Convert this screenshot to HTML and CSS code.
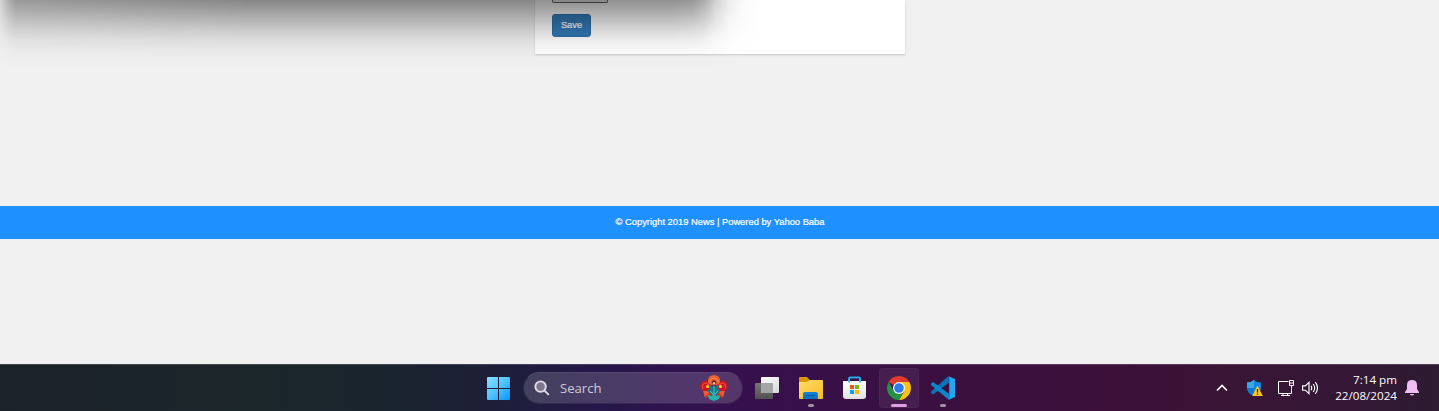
FILE: index.html
```html
<!DOCTYPE html>
<html lang="en">
<head>
<meta charset="utf-8">
<title>News</title>
<link rel="stylesheet" href="styles.css">
</head>
<body>
<main class="page">
  <section class="card">
    <div class="field"></div>
    <button class="save">Save</button>
  </section>
</main>
<footer class="footer"><span class="copy">© Copyright 2019 News | Powered by Yahoo Baba</span></footer>
<div class="below"></div>
<div class="window-shadow"></div>
<nav class="taskbar">
  <div class="cell start">
    <svg width="23" height="23" viewBox="0 0 23 23"><defs><linearGradient id="win" gradientUnits="userSpaceOnUse" x1="0" y1="0" x2="23" y2="23"><stop offset="0" stop-color="#89e1ff"/><stop offset=".5" stop-color="#4fc3fb"/><stop offset="1" stop-color="#0a94f8"/></linearGradient></defs><path fill="url(#win)" d="M1 0h10v11H0V1q0-1 1-1zM12 0h10q1 0 1 1v10H12zM0 12h11v11H1q-1 0-1-1zM12 12h11v10q0 1-1 1H12z"/></svg>
  </div>
  <div class="search">
    <svg width="16" height="16" viewBox="0 0 17 17" fill="none" stroke="#e0dce6" stroke-width="2" stroke-linecap="round"><circle cx="7" cy="7" r="5.600" fill="#81768f"/><path d="M11.200 11.200l4 4"/></svg>
    <span class="search-label">Search</span>
    <svg class="flower" width="28" height="26" viewBox="0 0 28 26">
      <path fill="#c4361c" d="M4 15l7 1 1 4-6 3q-3-2-2-8zM24 15l-7 1-1 4 6 3q3-2 2-8z"/>
      <path fill="#f0583a" d="M3 16l8 0-6 6zM25 16l-8 0 6 6z"/>
      <path fill="#c91824" d="M0 11q1-6 7-5l5 4-2 6-7 0q-3-2-3-5zM28 11q-1-6-7-5l-5 4 2 6 7 0q3-2 3-5z"/>
      <path fill="none" stroke="#f0443b" stroke-width="1.200" d="M3 14q-2-5 3-6l4 3M25 14q2-5-3-6l-4 3"/>
      <circle cx="7.500" cy="11.500" r="1.600" fill="#ffd02e"/><circle cx="20.500" cy="11.500" r="1.600" fill="#ffd02e"/>
      <path fill="#e8602c" d="M8 8V4l2-3 4-1 4 1 2 3v4l-3 2h-6z"/>
      <path fill="none" stroke="#ff8550" d="M10 7q0-4 4-4t4 4"/>
      <circle cx="14" cy="7.500" r="2.200" fill="#6c1830"/><circle cx="14" cy="8.300" r="1.200" fill="#ffc3a0"/>
      <path fill="#167b8c" d="M9 10l4 2 1-2 1 2 4-2-1 4 3 2-5 4h-4l-5-4 3-2z"/>
      <path fill="#23b5aa" d="M8 20l4 1 2-4 2 4 4-1-1 4-5 2-5-2z"/>
      <path stroke="#55d4d0" fill="none" stroke-width=".8" d="M14 11v8M10 16l3 3M18 16l-3 3"/>
    </svg>
  </div>
  <div class="cell">
    <svg width="24" height="22" viewBox="0 0 24 22"><defs><linearGradient id="tv" x1="0" y1="0" x2="1" y2="1"><stop stop-color="#fff"/><stop offset="1" stop-color="#d8d8d8"/></linearGradient><linearGradient id="tb" x1="0" y1="0" x2="0" y2="1"><stop stop-color="#787878"/><stop offset="1" stop-color="#505050"/></linearGradient></defs><rect y="6" width="18" height="16" rx="1" fill="url(#tb)"/><rect x="6" width="18" height="16" rx="1" fill="url(#tv)"/><path fill="#a5a5a5" d="M6 6h12v10H7q-1 0-1-1z"/></svg>
  </div>
  <div class="cell running">
    <svg width="24" height="22" viewBox="0 0 24 22"><defs><linearGradient id="fo" x1="0" y1="0" x2="1" y2="1"><stop stop-color="#ffdf68"/><stop offset="1" stop-color="#f7b928"/></linearGradient><linearGradient id="fb" x1="0" y1="0" x2="0" y2="1"><stop stop-color="#1683d5"/><stop offset="1" stop-color="#0f70c4"/></linearGradient></defs><path fill="#dc9706" d="M0 1q0-1 1-1h7l3 3h11q2 0 2 2v7H0z"/><path fill="url(#fo)" d="M0 5h8l3-2h12q1 0 1 1v17q0 1-1 1H1q-1 0-1-1z"/><path fill="url(#fb)" d="M4 22v-5q0-2 2-2h11q2 0 2 2v5z"/><path fill="#0a57a3" d="M7 18h9v1H7z"/></svg>
    <i class="dot"></i>
  </div>
  <div class="cell store">
    <svg width="23" height="24" viewBox="0 0 23 24"><defs><linearGradient id="bag" x1="0" y1="0" x2="0" y2="1"><stop stop-color="#fff"/><stop offset="1" stop-color="#e2e2e6"/></linearGradient></defs><path d="M6 7V2.500q0-1 1-1h9q1 0 1 1V7" fill="none" stroke="#25a9e6" stroke-width="2"/><path fill="url(#bag)" d="M0 5h23v15q0 3-3 3H3q-3 0-3-3z"/><path d="M6 4v2.500M17 4v2.500" stroke="#35c2f1" stroke-width="2"/><path fill="#f25022" d="M7 9h4v4H7z"/><path fill="#7fba00" d="M12 9h4v4h-4z"/><path fill="#00a4ef" d="M7 14h4v4H7z"/><path fill="#ffb900" d="M12 14h4v4h-4z"/></svg>
  </div>
  <div class="cell running active">
    <svg width="24" height="24" viewBox="0 0 24 24"><path fill="#e33b2e" d="M12 12L1.610 6A12 12 0 0 1 22.390 6z"/><path fill="#fbc116" d="M12 12V6h10.390A12 12 0 0 1 12 24l5.200-9z"/><path fill="#229342" d="M1.610 6A12 12 0 0 0 12 24l5.200-9H12L6.800 15z"/><circle cx="12" cy="12" r="6" fill="#fff"/><circle cx="12" cy="12" r="4.800" fill="#2f7bed"/></svg>
    <i class="dot"></i>
  </div>
  <div class="cell running">
    <svg width="24" height="24" viewBox="0 0 24 24"><path fill="#0873b5" d="M17.500 0L0 15.500v1.400l2.200 1.700L18 6.800z"/><path fill="#0b86ce" d="M0 7.800l2-1.700L18 17.800V24L0 9z"/><path fill="#25a5ef" d="M17.200 0L24 3v18l-6.800 3q1-.5 1-2V2q0-1.400-1-2z"/></svg>
    <i class="dot"></i>
  </div>
  <div class="tray">
    <svg class="chevron" width="12" height="8" viewBox="0 0 12 8"><path d="M1 6.500L6 1.500l5 5" fill="none" stroke="#fff" stroke-width="1.600"/></svg>
    <svg class="shield" width="16" height="17" viewBox="0 0 16 17"><path fill="#1687db" d="M7 0q3 2.500 7 2.500V8q0 5-7 8-7-3-7-8V2.500Q4 2.500 7 0z"/><path fill="#35a9ea" d="M7 0v8H0V2.500Q4 2.500 7 0z"/><path fill="#0f78cc" d="M7 8v8Q0 13 0 8z"/><path fill="#ffc322" d="M10.500 5.500L15.800 16H5.200z"/><path d="M10.500 9v3.500M10.500 13.500v1.300" stroke="#3a2b14" stroke-width="1.300"/></svg>
    <svg class="network" width="17" height="17" viewBox="0 0 17 17" fill="none" stroke="#fff" stroke-width="1"><path d="M10.500 1.500h-10v12h13v-5M5 13.500v2M9.500 13.500v2M3 15.500h9M11.500.5h4v5h-4zM11.500 3h4M13.500 5.500v3"/></svg>
    <svg class="sound" width="17" height="14" viewBox="0 0 17 14" fill="none" stroke="#fff" stroke-width="1.150"><path d="M.6 4.800h2.800L7 1.300v11.400L3.400 9.200H.6zM9 4.800q1.500 2.200 0 4.400M11.200 3q3 4 0 8M13.300 1.200q4.400 5.800 0 11.600"/></svg>
    <div class="clock"><span class="time">7:14 pm</span><span class="date">22/08/2024</span></div>
    <svg class="bell" width="14" height="16" viewBox="0 0 14 16"><path fill="#f0bdf2" d="M7 0q5 0 5 5v4l2 3v1H0v-1l2-3V5q0-5 5-5zM5 14h4q0 1.600-2 1.600T5 14z"/></svg>
  </div>
</nav>
</body>
</html>
```
FILE: styles.css
```css
* { box-sizing: border-box; }
body {
  margin: 0;
  width: 1439px;
  height: 411px;
  overflow: hidden;
  position: relative;
  background: #f0f0f0;
  font-family: "Liberation Sans", Arial, sans-serif;
}
.page { height: 206px; }
.card {
  width: 370px;
  height: 54px;
  margin-left: 535px;
  padding: 0 17px;
  background: #fff;
  box-shadow: 0 1px 2px rgba(0, 0, 0, .16);
}
.field {
  width: 56px;
  height: 3px;
  margin-bottom: 11px;
  background: #efefef;
  border: 1px solid #666;
  border-top: 0;
  border-radius: 0 0 2px 2px;
}
.save {
  display: block;
  width: 39px;
  height: 23px;
  padding: 0 0 2px;
  border: 1px solid #2e6da4;
  border-radius: 3px;
  background: #337ab7;
  color: #fff;
  font: 9.3px "Liberation Sans", Arial, sans-serif;
  -webkit-text-stroke: .2px #fff;
}
.footer {
  height: 33px;
  padding-left: 1px;
  background: #1e90ff;
  color: #fff;
  text-align: center;
  font-size: 9.35px;
  line-height: 32px;
  -webkit-text-stroke: .2px #fff;
}
.below { height: 125px; }
.window-shadow {
  position: absolute;
  inset: 0 auto auto 0;
  width: 770px;
  height: 68px;
  pointer-events: none;
  background: linear-gradient(rgba(0,0,0,.44) 0, rgba(0,0,0,.35) 10px, rgba(0,0,0,.25) 20px, rgba(0,0,0,.155) 30px, rgba(0,0,0,.08) 40px, rgba(0,0,0,.032) 50px, rgba(0,0,0,.008) 60px, transparent 68px);
  -webkit-mask-image: linear-gradient(90deg, rgba(0,0,0,.25) 0, rgba(0,0,0,.6) 8px, rgba(0,0,0,.82) 16px, #000 250px, #000 670px, rgba(0,0,0,.93) 692px, rgba(0,0,0,.75) 704px, rgba(0,0,0,.44) 715px, rgba(0,0,0,.18) 728px, rgba(0,0,0,.05) 742px, transparent 762px);
  mask-image: linear-gradient(90deg, rgba(0,0,0,.25) 0, rgba(0,0,0,.6) 8px, rgba(0,0,0,.82) 16px, #000 250px, #000 670px, rgba(0,0,0,.93) 692px, rgba(0,0,0,.75) 704px, rgba(0,0,0,.44) 715px, rgba(0,0,0,.18) 728px, rgba(0,0,0,.05) 742px, transparent 762px);
}
.taskbar {
  display: flex;
  align-items: center;
  height: 47px;
  padding-left: 477px;
  border-top: 1px solid rgba(255, 255, 255, .16);
  background: linear-gradient(90deg, #1c222a 0, #1b262b 250px, #1a242e 400px, #1c1f36 480px, #25184a 600px, #321150 690px, #38104a 790px, #3a103f 950px, #3c1039 1120px, #391535 1230px, #351735 1340px, #2c1b31 1439px);
}
.cell {
  display: flex;
  align-items: center;
  justify-content: center;
  position: relative;
  width: 44px;
  height: 46px;
  flex: none;
}
.start { width: 43px; }
.store { padding-right: 1px; }
.search {
  display: flex;
  align-items: center;
  width: 220px;
  height: 32px;
  margin: 0 2px 0 3px;
  padding: 0 14px 0 10px;
  border: 1px solid rgba(255, 255, 255, .07);
  border-top-color: rgba(255, 255, 255, .2);
  border-radius: 16px;
  background: rgba(255, 255, 255, .16);
  background-clip: padding-box;
  flex: none;
}
.search-label {
  margin-left: 10px;
  color: #d0c9da;
  font: 13.1px "Open Sans", "Noto Sans", sans-serif;
}
.flower { margin-left: auto; }
.dot {
  position: absolute;
  bottom: 4px;
  left: 19px;
  width: 6px;
  height: 3px;
  border-radius: 2px;
  background: #a193a5;
}
.active::before {
  content: "";
  position: absolute;
  inset: 3px 2px;
  border: 1px solid rgba(255, 255, 255, .03);
  border-radius: 4px;
  background: rgba(255, 255, 255, .065);
}
.active svg { position: relative; }
.active .dot { left: 14px; width: 16px; background: #dca1e2; }
.tray {
  display: flex;
  align-items: center;
  margin-left: auto;
  padding-right: 20px;
}
.shield { margin-left: 19px; }
.network { margin-left: 15px; }
.sound { margin-left: 7px; }
.clock {
  display: flex;
  flex-direction: column;
  align-items: flex-end;
  width: 78px;
  margin-right: 8px;
  color: #fff;
  font: 11.65px/16px "Open Sans", "Noto Sans", sans-serif;
  white-space: nowrap;
}
```
